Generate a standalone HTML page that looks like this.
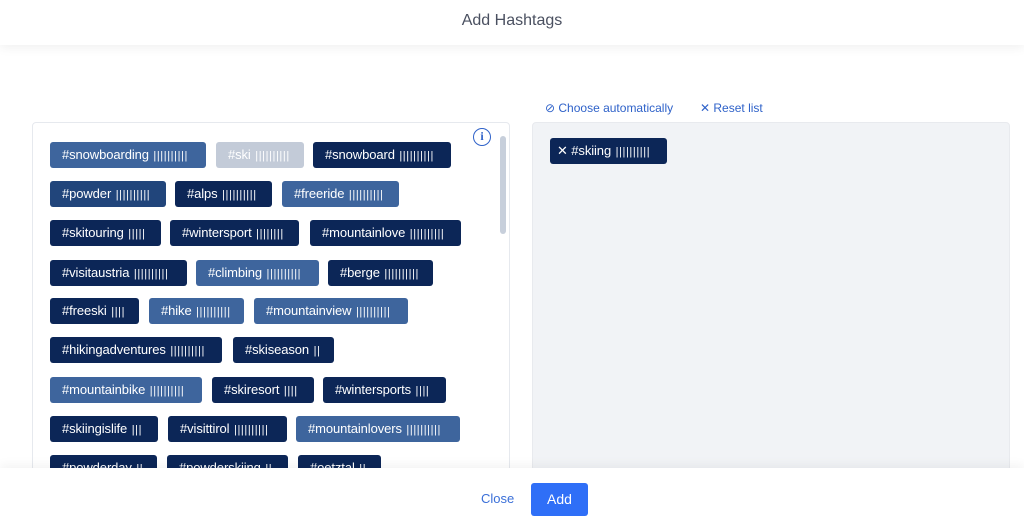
<!DOCTYPE html>
<html><head><meta charset="utf-8"><style>
*{margin:0;padding:0;box-sizing:border-box}
body{width:1024px;height:518px;overflow:hidden;background:#fff;font-family:"Liberation Sans",sans-serif;position:relative}
.hdr{position:absolute;left:0;top:0;width:1024px;height:45px;background:#fff;box-shadow:0 3px 10px rgba(0,0,0,.06);text-align:center;line-height:41px;font-size:16px;color:#4a5060;z-index:3}
.lp{position:absolute;left:32px;top:122px;width:478px;height:360px;border:1px solid #e6e9ee;border-radius:4px;background:#fff}
.rp{position:absolute;left:532px;top:122px;width:478px;height:360px;border-radius:4px;background:#f1f3f6;border:1px solid #e8eaee}
.t{position:absolute;height:26px;border-radius:3px;color:#fff;font-size:13px;line-height:26px;padding-left:12px;white-space:nowrap;overflow:hidden;letter-spacing:-0.1px}
.d{background:#0c2657}.m{background:#21457b}.l{background:#3e659d}.g{background:#c3cbd8}
.b{font-size:11px;letter-spacing:0.6px;margin-left:1px}
.ft{position:absolute;left:0;top:468px;width:1024px;height:50px;background:#fff;box-shadow:0 -3px 10px rgba(0,0,0,.05);z-index:3}
.lnk{position:absolute;top:101px;font-size:12px;color:#2f62c9}
</style></head><body>
<div class="hdr">Add Hashtags</div>
<div class="lnk" style="left:545px">&#8856; Choose automatically</div>
<div class="lnk" style="left:700px">✕ Reset list</div>
<div class="lp">
<div style="position:absolute;left:440px;top:5px;width:18px;height:18px;border:1.5px solid #2f62c9;border-radius:50%;color:#2f62c9;font:bold 12px 'Liberation Serif',serif;text-align:center;line-height:15px">i</div>
<div style="position:absolute;left:467px;top:13px;width:6px;height:98px;border-radius:3px;background:#c7cfdb"></div>
</div>
<div class="rp"></div>
<div class="t d" style="left:550px;top:138px;width:117px;padding-left:7px">✕ #skiing <span class="b">||||||||||</span></div>
<div class="t l" style="left:50px;top:142px;width:156px">#snowboarding <span class="b">||||||||||</span></div>
<div class="t g" style="left:216px;top:142px;width:88px">#ski <span class="b">||||||||||</span></div>
<div class="t d" style="left:313px;top:142px;width:138px">#snowboard <span class="b">||||||||||</span></div>
<div class="t m" style="left:50px;top:181px;width:116px">#powder <span class="b">||||||||||</span></div>
<div class="t d" style="left:175px;top:181px;width:97px">#alps <span class="b">||||||||||</span></div>
<div class="t l" style="left:282px;top:181px;width:117px">#freeride <span class="b">||||||||||</span></div>
<div class="t d" style="left:50px;top:220px;width:111px">#skitouring <span class="b">|||||</span></div>
<div class="t d" style="left:170px;top:220px;width:129px">#wintersport <span class="b">||||||||</span></div>
<div class="t d" style="left:310px;top:220px;width:151px">#mountainlove <span class="b">||||||||||</span></div>
<div class="t d" style="left:50px;top:260px;width:137px">#visitaustria <span class="b">||||||||||</span></div>
<div class="t l" style="left:196px;top:260px;width:123px">#climbing <span class="b">||||||||||</span></div>
<div class="t d" style="left:328px;top:260px;width:105px">#berge <span class="b">||||||||||</span></div>
<div class="t d" style="left:50px;top:298px;width:89px">#freeski <span class="b">||||</span></div>
<div class="t l" style="left:149px;top:298px;width:95px">#hike <span class="b">||||||||||</span></div>
<div class="t l" style="left:254px;top:298px;width:154px">#mountainview <span class="b">||||||||||</span></div>
<div class="t d" style="left:50px;top:337px;width:172px">#hikingadventures <span class="b">||||||||||</span></div>
<div class="t d" style="left:233px;top:337px;width:101px">#skiseason <span class="b">||</span></div>
<div class="t l" style="left:50px;top:377px;width:152px">#mountainbike <span class="b">||||||||||</span></div>
<div class="t d" style="left:212px;top:377px;width:102px">#skiresort <span class="b">||||</span></div>
<div class="t d" style="left:323px;top:377px;width:123px">#wintersports <span class="b">||||</span></div>
<div class="t d" style="left:50px;top:416px;width:108px">#skiingislife <span class="b">|||</span></div>
<div class="t d" style="left:168px;top:416px;width:119px">#visittirol <span class="b">||||||||||</span></div>
<div class="t l" style="left:296px;top:416px;width:164px">#mountainlovers <span class="b">||||||||||</span></div>
<div class="t d" style="left:50px;top:455px;width:107px">#powderday <span class="b">||</span></div>
<div class="t d" style="left:167px;top:455px;width:121px">#powderskiing <span class="b">||</span></div>
<div class="t d" style="left:298px;top:455px;width:83px">#oetztal <span class="b">||</span></div>
<div class="ft">
<div style="position:absolute;left:481px;top:23px;font-size:13px;color:#3a6fd8">Close</div>
<div style="position:absolute;left:531px;top:15px;width:57px;height:33px;border-radius:3px;background:#2f6ff7;color:#fff;font-size:14px;text-align:center;line-height:33px">Add</div>
</div>
</body></html>
